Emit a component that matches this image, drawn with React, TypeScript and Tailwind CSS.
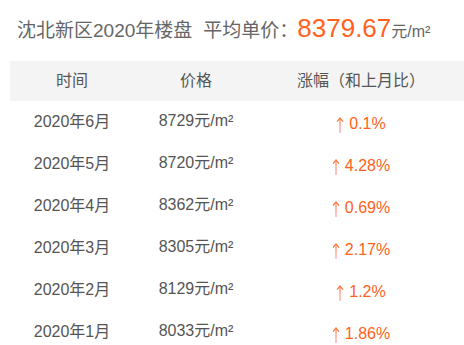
const rows = [
  { month: '2020年6月', price: '8729', change: '0.1%' },
  { month: '2020年5月', price: '8720', change: '4.28%' },
  { month: '2020年4月', price: '8362', change: '0.69%' },
  { month: '2020年3月', price: '8305', change: '2.17%' },
  { month: '2020年2月', price: '8129', change: '1.2%' },
  { month: '2020年1月', price: '8033', change: '1.86%' },
];

function UpArrow() {
  return (
    <svg width="8" height="16" viewBox="0 0 8 16" className="mr-[5px] mt-[3px]">
      <defs>
        <linearGradient id="up" gradientUnits="userSpaceOnUse" x1="0" y1="0" x2="0" y2="16">
          <stop offset="0" stopColor="#ff7a3d" />
          <stop offset="1" stopColor="#ffa0b4" />
        </linearGradient>
      </defs>
      <path d="M4 1 L4 16" stroke="url(#up)" strokeWidth="1.2" fill="none" />
      <path d="M1 4.6 L4 1 L7 4.6" stroke="#ff7a3d" strokeWidth="1.2" fill="none" />
    </svg>
  );
}

export default function App() {
  return (
    <div
      className="w-[464px] h-[345px] overflow-hidden bg-white text-[#555]"
      style={{ fontFamily: '"Liberation Sans", "Noto Sans CJK SC", sans-serif' }}
    >
      <div className="flex items-baseline h-[61px] pl-[17px] pt-[9px]">
        <span className="text-[19px] text-[#666]">沈北新区2020年楼盘</span>
        <span className="text-[19px] text-[#666] ml-[11px]">平均单价：</span>
        <span className="text-[26px] text-[#ff6220] -ml-[1px]">8379.67</span>
        <span className="text-[16px] text-[#666]">元/m²</span>
      </div>

      <div className="ml-[10px]">
        <div className="grid grid-cols-[124px_124px_1fr] h-[40px] items-center bg-[#f4f4f4] text-[16px]">
          <div className="text-center">时间</div>
          <div className="text-center">价格</div>
          <div className="text-center">涨幅（和上月比）</div>
        </div>

        {rows.map((r) => (
          <div key={r.month} className="grid grid-cols-[124px_124px_1fr] h-[42px] items-center text-[16px]">
            <div className="text-center">{r.month}</div>
            <div className="text-center -mt-[2px]">{r.price}元/m²</div>
            <div className="flex justify-center items-center mt-[3px] text-[#ff6220]">
              <UpArrow />
              <span>{r.change}</span>
            </div>
          </div>
        ))}
      </div>
    </div>
  );
}
